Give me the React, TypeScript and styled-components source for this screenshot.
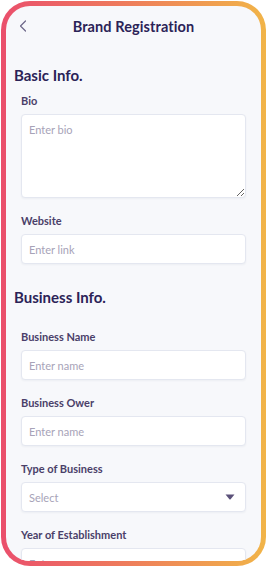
import React from 'react';
import styled, { createGlobalStyle } from 'styled-components';

const GlobalStyle = createGlobalStyle`
  html, body {
    margin: 0;
    padding: 0;
    background: #ffffff;
  }
  * {
    box-sizing: border-box;
  }
`;

const ink = '#2b2357';
const labelInk = '#4a3f69';
const hint = '#a7a3b8';
const line = '#e4e7f0';

const fields = [
  { label: 'Business Name', placeholder: 'Enter name' },
  { label: 'Business Ower', placeholder: 'Enter name' },
];

const App = () => {
  return (
    <>
      <GlobalStyle />
      <Frame>
        <Screen>
          <Header>
            <BackButton>
              <svg width='8' height='12' viewBox='0 0 8 12'>
                <polyline
                  points='6.5,1 1.5,6 6.5,11'
                  fill='none'
                  stroke='#6d6788'
                  strokeWidth='1.2'
                  strokeLinecap='round'
                  strokeLinejoin='round'
                />
              </svg>
            </BackButton>
            <Title>Brand Registration</Title>
          </Header>

          <SectionTitle $top={20}>Basic Info.</SectionTitle>
          <Form $top={10}>
            <Field>
              <Label>Bio</Label>
              <TextArea placeholder='Enter bio' />
            </Field>
            <Field>
              <Label>Website</Label>
              <Input type='text' placeholder='Enter link' />
            </Field>
          </Form>

          <SectionTitle $top={24}>Business Info.</SectionTitle>
          <Form $top={24}>
            {fields.map((el, idx) => (
              <Field key={idx}>
                <Label>{el.label}</Label>
                <Input type='text' placeholder={el.placeholder} />
              </Field>
            ))}
            <Field>
              <Label>Type of Business</Label>
              <SelectBox>
                <SelectText>Select</SelectText>
                <svg width='10' height='6' viewBox='0 0 10 6'>
                  <path d='M0.5 0.5 H9.5 L5.6 5.2 Q5 5.8 4.4 5.2 Z' fill='#5b5179' />
                </svg>
              </SelectBox>
            </Field>
            <Field>
              <Label>Year of Establishment</Label>
              <Input type='text' placeholder='Enter year' />
            </Field>
          </Form>
        </Screen>
      </Frame>
    </>
  );
};

const Frame = styled.div`
  margin: 1px 0 0 1px;
  width: 265px;
  height: 565px;
  padding: 5px;
  border-radius: 29px;
  background: linear-gradient(90deg, #ea4f6c 0%, #ee7a5c 45%, #f1b448 100%);
`;

const Screen = styled.div`
  width: 100%;
  height: 100%;
  border-radius: 24px;
  background: #f7f8fb;
  overflow: hidden;
  font-family: Lato, 'Noto Sans', sans-serif;
`;

const Header = styled.div`
  position: relative;
  height: 40px;
  display: flex;
  align-items: center;
  justify-content: center;
`;

const BackButton = styled.div`
  position: absolute;
  left: 13px;
  top: 14px;
  display: flex;
`;

const Title = styled.div`
  font-size: 14.5px;
  font-weight: 700;
  color: ${ink};
  letter-spacing: 0.1px;
`;

const SectionTitle = styled.div<{ $top: number }>`
  margin-top: ${(p) => p.$top}px;
  padding-left: 8px;
  height: 18px;
  line-height: 18px;
  font-size: 15px;
  font-weight: 700;
  color: ${ink};
`;

const Form = styled.div<{ $top: number }>`
  margin-top: ${(p) => p.$top}px;
  padding: 0 15px;
  display: flex;
  flex-direction: column;
  gap: 16px;
`;

const Field = styled.div`
  display: flex;
  flex-direction: column;
  gap: 6px;
`;

const Label = styled.div`
  height: 14px;
  line-height: 14px;
  font-size: 11px;
  font-weight: 700;
  color: ${labelInk};
`;

const Input = styled.input`
  width: 100%;
  height: 30px;
  padding: 0 7px;
  border: 1px solid ${line};
  border-radius: 4px;
  background: #ffffff;
  box-shadow: 0 1px 2px rgba(40, 50, 90, 0.05);
  font-family: Lato, 'Noto Sans', sans-serif;
  font-size: 11px;
  color: ${ink};
  outline: none;

  &::placeholder {
    color: ${hint};
  }
`;

const TextArea = styled.textarea`
  width: 100%;
  height: 84px;
  padding: 8px 7px;
  border: 1px solid ${line};
  border-radius: 4px;
  background: #ffffff;
  box-shadow: 0 1px 2px rgba(40, 50, 90, 0.05);
  font-family: Lato, 'Noto Sans', sans-serif;
  font-size: 11px;
  color: ${ink};
  outline: none;
  resize: vertical;
  display: block;

  &::placeholder {
    color: ${hint};
  }
`;

const SelectBox = styled.div`
  height: 30px;
  padding: 0 10px 0 7px;
  display: flex;
  align-items: center;
  justify-content: space-between;
  border: 1px solid ${line};
  border-radius: 4px;
  background: #ffffff;
  box-shadow: 0 1px 2px rgba(40, 50, 90, 0.05);
`;

const SelectText = styled.span`
  font-size: 11px;
  color: ${hint};
`;

export default App;
